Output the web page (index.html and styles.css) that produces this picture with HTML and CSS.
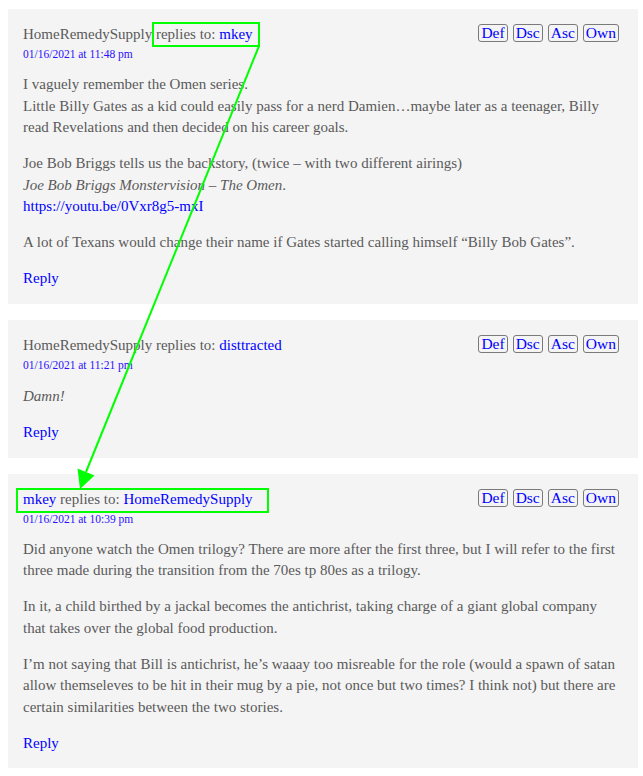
FILE: index.html
```html
<!DOCTYPE html>
<html>
<head>
<meta charset="utf-8">
<link rel="stylesheet" href="styles.css">
</head>
<body>
<div class="thread">
  <div class="comment">
    <div class="head">
      <div class="meta">
        <div class="who">HomeRemedySupply replies to: <a href="#">mkey</a></div>
        <div class="date"><a href="#">01/16/2021 at 11:48 pm</a></div>
      </div>
      <div class="sorts"><button>Def</button><button>Dsc</button><button>Asc</button><button>Own</button></div>
    </div>
    <div class="body">
      <p>I vaguely remember the Omen series.<br>Little Billy Gates as a kid could easily pass for a nerd Damien…maybe later as a teenager, Billy read Revelations and then decided on his career goals.</p>
      <p>Joe Bob Briggs tells us the backstory, (twice – with two different airings)<br><em>Joe Bob Briggs Monstervision – The Omen</em>.<br><a href="#">https://youtu.be/0Vxr8g5-mxI</a></p>
      <p>A lot of Texans would change their name if Gates started calling himself “Billy Bob Gates”.</p>
      <p class="reply"><a href="#">Reply</a></p>
    </div>
  </div>
  <div class="comment">
    <div class="head">
      <div class="meta">
        <div class="who">HomeRemedySupply replies to: <a href="#">disttracted</a></div>
        <div class="date"><a href="#">01/16/2021 at 11:21 pm</a></div>
      </div>
      <div class="sorts"><button>Def</button><button>Dsc</button><button>Asc</button><button>Own</button></div>
    </div>
    <div class="body">
      <p class="short"><em>Damn!</em></p>
      <p class="reply"><a href="#">Reply</a></p>
    </div>
  </div>
  <div class="comment">
    <div class="head">
      <div class="meta">
        <div class="who"><a href="#">mkey</a> replies to: <a href="#">HomeRemedySupply</a></div>
        <div class="date"><a href="#">01/16/2021 at 10:39 pm</a></div>
      </div>
      <div class="sorts"><button>Def</button><button>Dsc</button><button>Asc</button><button>Own</button></div>
    </div>
    <div class="body">
      <p>Did anyone watch the Omen trilogy? There are more after the first three, but I will refer to the first three made during the transition from the 70es tp 80es as a trilogy.</p>
      <p>In it, a child birthed by a jackal becomes the antichrist, taking charge of a giant global company that takes over the global food production.</p>
      <p>I’m not saying that Bill is antichrist, he’s waaay too misreable for the role (would a spawn of satan allow themseleves to be hit in their mug by a pie, not once but two times? I think not) but there are certain similarities between the two stories.</p>
      <p class="reply"><a href="#">Reply</a></p>
    </div>
  </div>
</div>
<svg class="annot" width="643" height="776" viewBox="0 0 643 776">
  <rect x="153" y="23" width="106" height="23" fill="none" stroke="#00ff00" stroke-width="2"/>
  <rect x="17" y="489" width="251" height="23" fill="none" stroke="#00ff00" stroke-width="2"/>
  <line x1="259" y1="46" x2="86" y2="472" stroke="#00ff00" stroke-width="2"/>
  <polygon points="80,489 77.5,468.5 94.5,475.5" fill="#00ff00"/>
</svg>
</body>
</html>
```
FILE: styles.css
```css
html, body {
  margin: 0;
  padding: 0;
  background: #ffffff;
}
body {
  position: relative;
  font-family: "Liberation Serif", serif;
  color: #5a5a5a;
}
.thread {
  padding: 9px 5px 0 8px;
  display: flex;
  flex-direction: column;
  gap: 16px;
}
.comment {
  background: #f4f4f4;
  padding: 14px 15px 14px 15px;
}
.head {
  display: flex;
  justify-content: space-between;
  align-items: flex-start;
}
.who {
  font-size: 15px;
  line-height: 22px;
}
.date {
  font-size: 11.5px;
  line-height: 18px;
}
.date a {
  color: #2b10ff;
}
a {
  color: #0000ff;
  text-decoration: none;
}
.sorts {
  display: flex;
  gap: 5px;
  padding-top: 1px;
  margin-right: 4px;
}
.sorts button {
  font-family: "Liberation Serif", serif;
  font-size: 15.5px;
  line-height: 16px;
  color: #0000ff;
  background: #f4f4f4;
  border: 1px solid #7a7a7a;
  border-radius: 3px;
  padding: 0 2px;
  margin: 0;
}
.body {
  padding-top: 11px;
}
.body p {
  margin: 0 0 14.5px 0;
  font-size: 15px;
  line-height: 21.5px;
}
.body p.short {
  line-height: 23px;
}
.body p.reply {
  margin: 0;
}
.annot {
  position: absolute;
  left: 0;
  top: 0;
  pointer-events: none;
}
```
